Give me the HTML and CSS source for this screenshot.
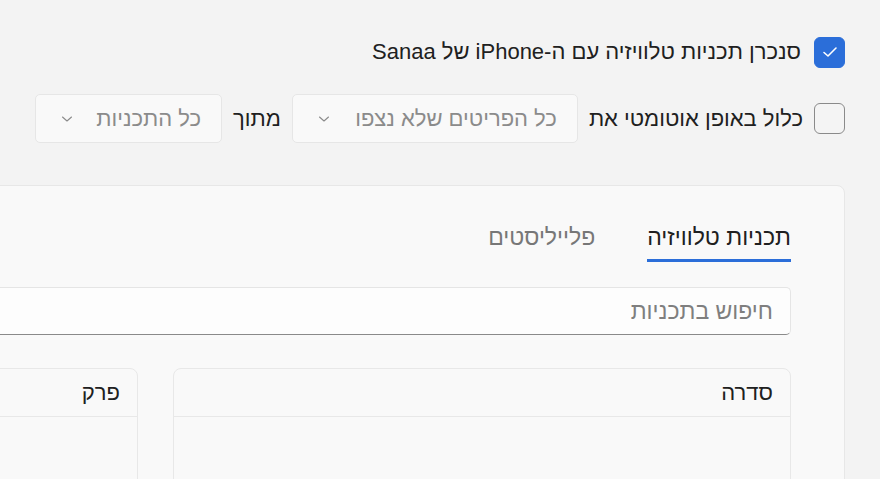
FILE: index.html
```html
<!DOCTYPE html>
<html lang="he" dir="rtl">
<head>
    <meta charset="utf-8">
    <title>סנכרון תכניות טלוויזיה</title>
    <link rel="stylesheet" href="styles.css">
</head>
<body>
    <div class="page">
        <label class="row sync-row">
            <span class="check on">
                <svg width="18" height="18" viewBox="0 0 18 18"><path d="M3 9.5 L7 13 L15 5" fill="none" stroke="#fff" stroke-width="1.6" stroke-linecap="round" stroke-linejoin="round"/></svg>
            </span>
            <span class="label">סנכרן תכניות טלוויזיה עם ה-iPhone של Sanaa</span>
        </label>

        <div class="row include-row">
            <span class="check"></span>
            <span class="label">כלול באופן אוטומטי את</span>
            <div class="select wide">
                <span class="select-text">כל הפריטים שלא נצפו</span>
                <svg class="chevron" width="12" height="8" viewBox="0 0 12 8"><path d="M1.5 2 L6 6 L10.5 2" fill="none" stroke="#8a8a8a" stroke-width="1.1" stroke-linecap="round" stroke-linejoin="round"/></svg>
            </div>
            <span class="label">מתוך</span>
            <div class="select narrow">
                <span class="select-text">כל התכניות</span>
                <svg class="chevron" width="12" height="8" viewBox="0 0 12 8"><path d="M1.5 2 L6 6 L10.5 2" fill="none" stroke="#8a8a8a" stroke-width="1.1" stroke-linecap="round" stroke-linejoin="round"/></svg>
            </div>
        </div>

        <div class="panel">
            <div class="tabs">
                <div class="tab active">תכניות טלוויזיה</div>
                <div class="tab">פלייליסטים</div>
            </div>
            <div class="search">חיפוש בתכניות</div>
            <div class="lists">
                <div class="list series">
                    <div class="list-head">סדרה</div>
                </div>
                <div class="list episodes">
                    <div class="list-head">פרק</div>
                </div>
            </div>
        </div>
    </div>
</body>
</html>
```

FILE: styles.css
```css
html, body {
    margin: 0;
    height: 100%;
    overflow: hidden;
}
body {
    font-family: "Liberation Sans", "DejaVu Sans", sans-serif;
    font-size: 22px;
    color: #202020;
    background-color: #f3f3f3;
}
.page {
    padding: 36px 35px 0 35px;
}
.row {
    display: flex;
    align-items: center;
    gap: 11px;
}
.label {
    flex: none;
    white-space: nowrap;
}
.sync-row {
    height: 32px;
}
.sync-row .label {
    margin-right: 2px;
}
.include-row {
    margin-top: 26px;
    height: 49px;
}
.include-row .label:first-of-type {
    margin-left: 1px;
}
.check {
    flex: none;
    width: 31px;
    height: 31px;
    box-sizing: border-box;
    border: 1px solid #8a8a8a;
    border-radius: 6px;
    background-color: #f4f4f4;
    display: flex;
    align-items: center;
    justify-content: center;
}
.check.on {
    background-color: #2b6ed9;
    border-color: #2b6ed9;
}
.select {
    flex: none;
    height: 49px;
    box-sizing: border-box;
    border: 1px solid #e6e6e6;
    border-radius: 5px;
    background-color: #f9f9f9;
    display: flex;
    align-items: center;
    justify-content: space-between;
    padding: 0 20px 0 25px;
    color: #8b8b8b;
    white-space: nowrap;
}
.select.wide {
    width: 286px;
}
.select.narrow {
    width: 187px;
}
.chevron {
    flex: none;
}
.panel {
    width: 1100px;
    height: 400px;
    margin-top: 42px;
    box-sizing: border-box;
    border: 1px solid #e7e7e7;
    border-radius: 8px;
    background-color: #f9f9f9;
    padding: 36px 53px 0 0;
}
.tabs {
    display: flex;
    gap: 52px;
    font-size: 23px;
}
.tab {
    padding-bottom: 7px;
    border-bottom: 3px solid transparent;
    color: #777;
    line-height: 30px;
}
.tab.active {
    color: #202020;
    border-bottom-color: #2b6ed9;
}
.search {
    margin-top: 25px;
    height: 48px;
    box-sizing: border-box;
    background-color: #fdfdfd;
    border: 1px solid #e5e5e5;
    border-bottom-color: #8a8a8a;
    border-radius: 5px;
    padding: 0 17px;
    display: flex;
    align-items: center;
    font-size: 23px;
    color: #7f7f7f;
}
.lists {
    display: flex;
    gap: 35px;
    margin-top: 33px;
}
.list {
    height: 200px;
    box-sizing: border-box;
    border: 1px solid #e8e8e8;
    border-radius: 8px;
    background-color: #f9f9f9;
}
.series {
    width: 618px;
}
.episodes {
    flex: 1;
}
.list-head {
    height: 48px;
    box-sizing: border-box;
    border-bottom: 1px solid #e8e8e8;
    display: flex;
    align-items: center;
    padding: 0 17px;
}
```
